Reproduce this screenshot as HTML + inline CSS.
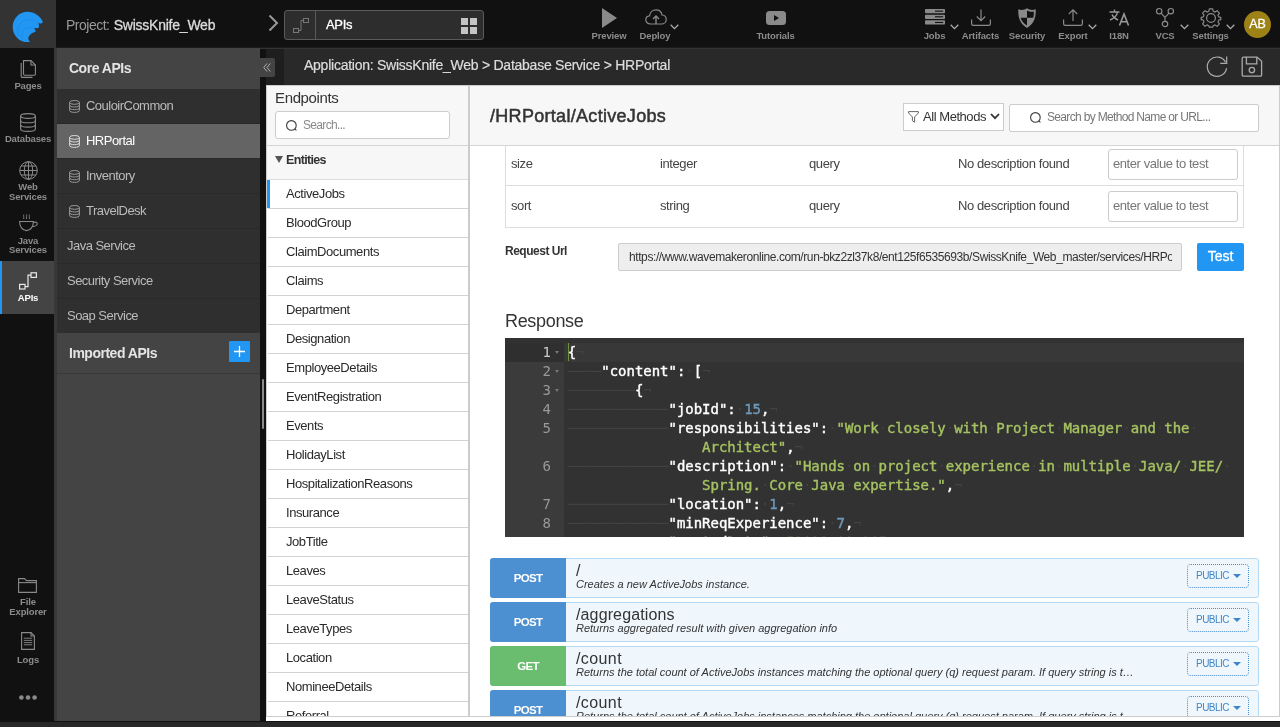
<!DOCTYPE html>
<html lang="en">
<head>
<meta charset="utf-8">
<title>WaveMaker Studio - APIs</title>
<style>
*{box-sizing:border-box;margin:0;padding:0}
html,body{width:1280px;height:727px;overflow:hidden;background:#111;-webkit-font-smoothing:antialiased;font-family:"Liberation Sans",sans-serif;color:#333}
.abs{position:absolute}
svg{display:block;overflow:visible}
/* top bar */
#topbar{position:absolute;left:0;top:0;width:1280px;height:48px;background:#111}
#logo{position:absolute;left:0;top:0;width:56px;height:48px;background:#333}
.tb-item{position:absolute;top:0;height:48px;color:#8c8c8c;font-size:9.5px;text-align:center;font-weight:bold;letter-spacing:-0.13px}
.tb-item .lbl{position:absolute;left:-30px;right:-30px;top:29.5px;line-height:12px;text-align:center;white-space:nowrap}
/* left nav */
#leftnav{position:absolute;left:0;top:48px;width:54px;height:673px;background:#111}
#navborder{position:absolute;left:54px;top:48px;width:3px;height:673px;background:#383838}
.nav-item{position:absolute;left:0;width:56px;margin-top:1px;color:#8c8c8c;font-size:9.5px;line-height:10px;text-align:center;font-weight:bold;letter-spacing:-0.15px}
/* side panel */
#side{position:absolute;left:57px;top:48px;width:203px;height:673px;background:#444}
.side-h{position:absolute;left:0;width:203px;height:40px;background:#444;color:#e4e4e4;font-weight:bold;font-size:14px;line-height:40px;padding-left:12px;letter-spacing:-0.49px}
.side-i{position:absolute;left:0;width:203px;height:35px;background:#2f2f2f;border-bottom:1px solid #292929;color:#bbb;font-size:13px;line-height:34px;letter-spacing:-0.52px}
.side-i.sel{background:#646464;color:#fff}
/* main */
#crumb{position:absolute;left:284px;top:48px;width:996px;height:37px;background:#292929;color:#ddd;font-size:14px;line-height:35px;letter-spacing:-0.25px;-webkit-text-stroke:0.2px #ddd}
#panel{position:absolute;left:266px;top:85px;width:1014px;height:632px;background:#fff;border-right:1px solid #ccc;border-bottom:1px solid #ccc;overflow:hidden}
#bottombar{position:absolute;left:0;top:721px;width:1280px;height:6px;background:#282828;border-top:1px solid #111}

/* panel (coords relative to 266,85) */
#ep-h{position:absolute;left:0;top:0;width:202px;height:61px;background:#f7f7f7;border-top:1px solid #ccc;border-left:1px solid #ccc;border-bottom:1px solid #d4d4d4}
#ep-ent{position:absolute;left:0;top:61px;width:202px;height:34px;background:#f7f7f7;border-left:1px solid #ccc;border-bottom:1px solid #ddd}
.ep-i{position:absolute;left:2px;width:200px;height:29px;border-bottom:1px solid #d2d2d2;font-size:13px;line-height:28px;color:#2a2a2a;padding-left:18px;letter-spacing:-0.43px;white-space:nowrap;background:#fff}
#vdiv{position:absolute;left:202px;top:0;width:2px;height:632px;background:#ccc}
#ct-h{position:absolute;left:204px;top:0;width:810px;height:61px;background:#f7f7f7;border-top:1px solid #ccc;border-bottom:1px solid #d4d4d4}
.inp{position:absolute;background:#fff;border:1px solid #ccc;border-radius:3px}
.td{position:absolute;font-size:13px;line-height:16px;color:#444;white-space:nowrap;letter-spacing:-0.4px}
.ph{color:#777}
/* ace */
#ace{position:absolute;left:239px;top:253px;width:739px;height:199px;background:#323232;overflow:hidden;font-family:"DejaVu Sans Mono","Liberation Mono",monospace;font-size:14px;line-height:19px;color:#fff}
#ace .gut{position:absolute;left:0;top:4.5px;width:59px;height:200px;background:#3b3b3b}
#ace .ln{position:absolute;left:0;width:46px;text-align:right;color:#999;height:19px}
#ace .fold{position:absolute;left:50px;width:0;height:0;border-left:2.5px solid transparent;border-right:2.5px solid transparent;border-top:3px solid #777}
#ace .l{position:absolute;left:62.7px;-webkit-text-stroke:0.4px currentColor;height:19px;white-space:pre;letter-spacing:-0.028px}
#ace .s{color:#a5c261}
#ace .n{color:#6c99bb}
#ace .i{color:#424242;-webkit-text-stroke:0}
/* method rows */
.mrow{position:absolute;left:224px;width:769px;height:40px;background:#eff7fd;border:1px solid #b4dbf5;border-radius:3px}
.mrow .bdg{position:absolute;left:-1px;top:-1px;width:76px;height:40px;border-radius:3px 0 0 3px;color:#fff;font-weight:bold;font-size:11.5px;line-height:41px;text-align:center;letter-spacing:-0.7px}
.mrow .pth{position:absolute;left:85px;top:3px;font-size:16px;line-height:18px;color:#333;white-space:nowrap;letter-spacing:0.13px}
.mrow .dsc{position:absolute;left:85px;top:19px;font-size:11px;line-height:13px;font-style:italic;color:#333;white-space:nowrap;letter-spacing:0px}
.mrow .pub{position:absolute;left:696px;top:5px;width:62px;height:24px;border:1px dotted #4a8fd0;border-radius:4px;color:#3f86c8;font-size:10px;line-height:22px;padding-left:8px;letter-spacing:-0.53px}
.mrow .pub i{position:absolute;left:45px;top:9px;width:0;height:0;border-left:4px solid transparent;border-right:4px solid transparent;border-top:4px solid #3f86c8}
</style>
</head>
<body><div id="root" style="position:absolute;left:0;top:0;width:1280px;height:727px;will-change:transform">
<div id="topbar">
<div class="abs" style="left:0;top:47px;width:1280px;height:1px;background:#1c1c1c"></div>
<div class="abs" style="left:66px;top:15px;font-size:14px;line-height:20px;color:#999;white-space:nowrap;letter-spacing:-0.5px">Project: <span style="color:#dcdcdc;letter-spacing:-0.23px;margin-left:0.8px;-webkit-text-stroke:0.3px #dcdcdc">SwissKnife_Web</span></div>
<svg class="abs" style="left:267px;top:14px" width="12" height="18" viewBox="0 0 12 18"><path d="M2.5 1.5 L10 9 L2.5 16.5" fill="none" stroke="#999" stroke-width="2"/></svg>
<div class="abs" style="left:284px;top:10px;width:200px;height:30px;border:1px solid #5a5a5a;border-radius:3px;background:#2d2d2d">
  <div class="abs" style="left:30px;top:0;width:1px;height:28px;background:#5a5a5a"></div>
  <svg class="abs" style="left:7.5px;top:6.5px" width="16" height="16" viewBox="0 0 16 16" fill="none" stroke="#777" stroke-width="1"><rect x="0.5" y="10.5" width="5" height="4"/><rect x="10.5" y="0.5" width="5" height="4"/><path d="M5.5 12.5 H8 V2.5 H10.5"/></svg>
  <div class="abs" style="left:41px;top:0;line-height:28px;font-size:13px;color:#fff;-webkit-text-stroke:0.3px #fff;letter-spacing:-0.3px">APIs</div>
  <svg class="abs" style="left:176px;top:6.5px" width="16" height="16" viewBox="0 0 16 16" fill="#c4c4c4"><rect x="0" y="0" width="7" height="7"/><rect x="9" y="0" width="7" height="7"/><rect x="0" y="9" width="7" height="7"/><rect x="9" y="9" width="7" height="7"/></svg>
</div>
<!-- Preview -->
<div class="tb-item" style="left:609px;width:0"><svg class="abs" style="left:-7px;top:8px" width="15" height="20" viewBox="0 0 15 20"><path d="M0 0 L15 10 L0 20Z" fill="#8a8a8a"/></svg><div class="lbl">Preview</div></div>
<!-- Deploy -->
<div class="tb-item" style="left:655px;width:0"><svg class="abs" style="left:-10px;top:9px" width="22" height="16" viewBox="0 0 22 16" fill="none" stroke="#8a8a8a" stroke-width="1.2"><path d="M5.5 15 C2.5 15 0.8 13 0.8 10.8 C0.8 8.6 2.4 7 4.6 6.8 C5 3.2 7.8 0.8 11 0.8 C14.2 0.8 16.6 3 17 6 C19.4 6.2 21.2 8 21.2 10.4 C21.2 13 19.2 15 16.6 15 Z"/><path d="M11 15 V7 M8 10 L11 7 L14 10" stroke-width="1.4"/></svg><div class="lbl">Deploy</div><svg class="abs" style="left:14.5px;top:23.5px" width="9" height="6" viewBox="0 0 9 6"><path d="M0.7 0.8 L4.5 4.6 L8.3 0.8" fill="none" stroke="#aaa" stroke-width="1.3"/></svg></div>
<!-- Tutorials -->
<div class="tb-item" style="left:775.5px;width:0"><svg class="abs" style="left:-10px;top:11px" width="20" height="14" viewBox="0 0 20 14"><rect x="0" y="0" width="20" height="14" rx="3.5" fill="#8a8a8a"/><path d="M8 4 L13 7 L8 10Z" fill="#111"/></svg><div class="lbl">Tutorials</div></div>
<!-- Jobs -->
<div class="tb-item" style="left:934.5px;width:0"><svg class="abs" style="left:-10px;top:9px" width="20" height="15.8" viewBox="0 0 22 17" preserveAspectRatio="none" fill="#8a8a8a"><rect x="0" y="0" width="22" height="4.6" rx="0.8"/><rect x="0" y="6.1" width="22" height="4.6" rx="0.8"/><rect x="0" y="12.2" width="22" height="4.6" rx="0.8"/><rect x="11" y="1.7" width="9" height="1.2" fill="#111"/><rect x="11" y="7.8" width="9" height="1.2" fill="#111"/><rect x="11" y="13.9" width="9" height="1.2" fill="#111"/></svg><div class="lbl">Jobs</div><svg class="abs" style="left:15px;top:23.5px" width="9" height="6" viewBox="0 0 9 6"><path d="M0.7 0.8 L4.5 4.6 L8.3 0.8" fill="none" stroke="#aaa" stroke-width="1.3"/></svg></div>
<!-- Artifacts -->
<div class="tb-item" style="left:980.5px;width:0"><svg class="abs" style="left:-10px;top:9px" width="20" height="17" viewBox="0 0 20 17" fill="none" stroke="#8a8a8a" stroke-width="1.2"><path d="M10 0.5 V11.5 M5.8 7.5 L10 11.7 L14.2 7.5"/><path d="M0.6 10.5 V14.8 A1.6 1.6 0 0 0 2.2 16.4 H17.8 A1.6 1.6 0 0 0 19.4 14.8 V10.5"/></svg><div class="lbl">Artifacts</div></div>
<!-- Security -->
<div class="tb-item" style="left:1027px;width:0"><svg class="abs" style="left:-9px;top:8px" width="18" height="20" viewBox="0 0 18 20"><path d="M0.3 1.2 C3.5 2.6 6.5 1.8 9 0.2 C11.5 1.8 14.5 2.6 17.7 1.2 C18 8 17 15 9 20 C1 15 0 8 0.3 1.2Z" fill="#8a8a8a"/><path d="M9 2.4 C11 3.6 13.5 4 15.8 3.5 C15.9 5.6 15.8 7.8 15.3 9.8 H9 Z" fill="#111"/><path d="M9 9.8 V17.6 C5.2 15 3.3 12.6 2.7 9.8 Z" fill="#111"/></svg><div class="lbl">Security</div></div>
<!-- Export -->
<div class="tb-item" style="left:1073px;width:0"><svg class="abs" style="left:-10px;top:9px" width="20" height="17" viewBox="0 0 20 17" fill="none" stroke="#8a8a8a" stroke-width="1.2"><path d="M10 12 V1 M5.8 5 L10 0.8 L14.2 5"/><path d="M0.6 10.5 V14.8 A1.6 1.6 0 0 0 2.2 16.4 H17.8 A1.6 1.6 0 0 0 19.4 14.8 V10.5"/></svg><div class="lbl">Export</div><svg class="abs" style="left:15px;top:23.5px" width="9" height="6" viewBox="0 0 9 6"><path d="M0.7 0.8 L4.5 4.6 L8.3 0.8" fill="none" stroke="#aaa" stroke-width="1.3"/></svg></div>
<!-- I18N -->
<div class="tb-item" style="left:1119px;width:0"><svg class="abs" style="left:-10px;top:9px" width="21" height="17" viewBox="0 0 21 17" fill="none" stroke="#999" stroke-width="1.4"><path d="M0.5 3 H10.5 M5.5 0.5 V3 M8.5 3 C8 6.5 5 9.5 1 11 M3 5.5 C4 8 6.5 10 9 11"/><path d="M10.5 16.5 L15 5 L19.5 16.5 M12 12.8 H18" stroke-width="1.6"/></svg><div class="lbl">I18N</div></div>
<!-- VCS -->
<div class="tb-item" style="left:1165px;width:0"><svg class="abs" style="left:-9px;top:8px" width="18" height="19" viewBox="0 0 18 19" fill="none" stroke="#8a8a8a" stroke-width="1.2"><circle cx="3.2" cy="3.2" r="2.7"/><circle cx="14.8" cy="3.2" r="2.7"/><circle cx="9" cy="16" r="2.7"/><path d="M5 5.2 L9 9.4 L13 5.2 M9 9.4 V13.3"/></svg><div class="lbl">VCS</div><svg class="abs" style="left:15px;top:23.5px" width="9" height="6" viewBox="0 0 9 6"><path d="M0.7 0.8 L4.5 4.6 L8.3 0.8" fill="none" stroke="#aaa" stroke-width="1.3"/></svg></div>
<!-- Settings -->
<div class="tb-item" style="left:1210.5px;width:0"><svg class="abs" style="left:-9.5px;top:7.5px" width="20" height="20" viewBox="0 0 20 20" fill="none" stroke="#8a8a8a" stroke-width="1.2"><circle cx="10" cy="10" r="4.4"/><path d="M8.3 0.8 H11.7 L12.2 3.3 L14 4.1 L16.1 2.7 L18.4 5.1 L17 7.1 L17.7 8.9 L19.8 9.3 V11.7 L17.7 12.1 L17 13.9 L18.4 15.9 L16.1 18.3 L14 16.9 L12.2 17.7 L11.7 19.2 H8.3 L7.8 17.7 L6 16.9 L3.9 18.3 L1.6 15.9 L3 13.9 L2.3 12.1 L0.2 11.7 V9.3 L2.3 8.9 L3 7.1 L1.6 5.1 L3.9 2.7 L6 4.1 L7.8 3.3 Z" stroke-linejoin="round"/></svg><div class="lbl">Settings</div><svg class="abs" style="left:15px;top:23.5px" width="9" height="6" viewBox="0 0 9 6"><path d="M0.7 0.8 L4.5 4.6 L8.3 0.8" fill="none" stroke="#aaa" stroke-width="1.3"/></svg></div>
<!-- avatar -->
<div class="abs" style="left:1244px;top:11px;width:27px;height:27px;border-radius:50%;background:#9d8316;color:#fff;font-size:12.5px;line-height:27px;text-align:center;letter-spacing:-0.2px;-webkit-text-stroke:0.3px #fff">AB</div>
</div>
<div id="logo"><svg class="abs" style="left:8px;top:6px" width="42" height="40" viewBox="0 0 763 727"><path d="M355 104 C480 104 590 185 636 296 C600 330 565 318 548 306 C560 340 568 365 566 386 C535 410 495 405 470 396 C490 420 502 445 500 466 C450 480 400 510 375 560 C360 600 375 630 402 650 C385 655 370 656 355 656 C205 656 85 535 85 380 C85 228 205 104 355 104Z" fill="#2196f3"/><path d="M188 560 C140 420 220 250 370 245 C450 243 510 270 548 306" fill="none" stroke="#1a80d4" stroke-width="7"/><path d="M268 600 C225 500 280 395 370 388 C410 385 445 388 470 396" fill="none" stroke="#1a80d4" stroke-width="7"/></svg></div>
<div id="leftnav">
<!-- coordinates relative to top:48 -->
<svg class="abs" style="left:20px;top:12px" width="16" height="18" viewBox="0 0 16 18" fill="none" stroke="#8a8a8a" stroke-width="1.1"><path d="M3.5 0.6 H11 L15.4 5 V14 A1.2 1.2 0 0 1 14.2 15.2 H4.7 A1.2 1.2 0 0 1 3.5 14 Z" fill="#111"/><path d="M11 0.6 V5 H15.4"/><path d="M1.2 3 V16.2 A1.2 1.2 0 0 0 2.4 17.4 H12.5"/></svg>
<div class="nav-item" style="top:32px">Pages</div>
<svg class="abs" style="left:20px;top:64.5px" width="16" height="19" viewBox="0 0 16 19" fill="none" stroke="#8a8a8a" stroke-width="1.1"><ellipse cx="8" cy="3" rx="7.4" ry="2.4"/><path d="M0.6 3 V16 C0.6 17.4 3.8 18.4 8 18.4 C12.2 18.4 15.4 17.4 15.4 16 V3"/><path d="M0.6 7.4 C0.6 8.8 3.8 9.8 8 9.8 C12.2 9.8 15.4 8.8 15.4 7.4 M0.6 11.7 C0.6 13.1 3.8 14.1 8 14.1 C12.2 14.1 15.4 13.1 15.4 11.7"/></svg>
<div class="nav-item" style="top:85px">Databases</div>
<svg class="abs" style="left:18.5px;top:113px" width="19" height="19" viewBox="0 0 19 19" fill="none" stroke="#8a8a8a" stroke-width="1"><circle cx="9.5" cy="9.5" r="8.8"/><ellipse cx="9.5" cy="9.5" rx="4.2" ry="8.8"/><path d="M9.5 0.7 V18.3 M0.7 9.5 H18.3 M2 5 H17 M2 14 H17"/></svg>
<div class="nav-item" style="top:133.3px;line-height:9.3px">Web<br>Services</div>
<svg class="abs" style="left:19px;top:166px" width="19" height="18" viewBox="0 0 19 18" fill="none" stroke="#8a8a8a" stroke-width="1.1"><path d="M0.6 7.5 H14.4 C14.4 12.5 11.8 16.6 7.5 16.6 C3.2 16.6 0.6 12.5 0.6 7.5Z"/><path d="M14.3 8.6 C16.6 7.6 18.4 8.4 18.2 10 C18 11.6 15.6 12.6 13.4 12.4"/><path d="M4.8 0.5 C4 2 5.4 3 4.6 5 M7.6 0.5 C6.8 2 8.2 3 7.4 5 M10.4 0.5 C9.6 2 11 3 10.2 5" stroke-width="0.9"/></svg>
<div class="nav-item" style="top:186.8px;line-height:9.3px">Java<br>Services</div>
<div class="abs" style="left:0;top:213px;width:54px;height:53px;background:#444;border-left:2px solid #2196f3"></div>
<svg class="abs" style="left:19px;top:224px" width="18" height="18" viewBox="0 0 18 18" fill="none" stroke="#e8e8e8" stroke-width="1.2"><rect x="0.6" y="12.4" width="5.4" height="4.6"/><rect x="12" y="0.8" width="5.4" height="4.6"/><path d="M6 14.7 H9 V3.1 H12"/></svg>
<div class="nav-item" style="top:244px;color:#fff">APIs</div>
<svg class="abs" style="left:18px;top:530px" width="19" height="15" viewBox="0 0 19 15" fill="none" stroke="#8a8a8a" stroke-width="1.1"><path d="M0.6 14.4 V0.6 H6.5 L8.5 2.6 H18.4 V14.4 Z"/><path d="M0.6 4.6 H18.4"/></svg>
<div class="nav-item" style="top:547.7px;line-height:10.3px">File<br>Explorer</div>
<svg class="abs" style="left:20.5px;top:584px" width="14" height="18" viewBox="0 0 14 18" fill="none" stroke="#8a8a8a" stroke-width="1.1"><path d="M0.6 0.6 H10 L13.4 4 V17.4 H0.6 Z"/><path d="M10 0.6 V4 H13.4"/><path d="M2.8 6.2 H11.2 M2.8 8.4 H11.2 M2.8 10.6 H11.2 M2.8 12.8 H11.2" stroke-width="0.9"/></svg>
<div class="nav-item" style="top:605.5px">Logs</div>
<svg class="abs" style="left:18.5px;top:646.5px" width="18" height="5" viewBox="0 0 18 5" fill="#8a8a8a"><circle cx="2.4" cy="2.5" r="2.3"/><circle cx="9" cy="2.5" r="2.3"/><circle cx="15.6" cy="2.5" r="2.3"/></svg>
</div>
<div id="navborder"></div>
<div id="side">
<div class="side-h" style="top:0">Core APIs</div>
<div class="side-i" style="top:41px"><svg class="abs" style="left:12px;top:11px" width="11" height="13" viewBox="0 0 11 13" fill="none" stroke="#999" stroke-width="1"><ellipse cx="5.5" cy="2.4" rx="4.9" ry="1.9"/><path d="M0.6 2.4 V10.6 C0.6 11.6 2.8 12.4 5.5 12.4 C8.2 12.4 10.4 11.6 10.4 10.6 V2.4"/><path d="M0.6 5.2 C0.6 6.2 2.8 7 5.5 7 C8.2 7 10.4 6.2 10.4 5.2 M0.6 7.9 C0.6 8.9 2.8 9.7 5.5 9.7 C8.2 9.7 10.4 8.9 10.4 7.9"/></svg><span class="abs" style="left:29px;top:0;white-space:nowrap">CouloirCommon</span></div>
<div class="side-i sel" style="top:76px"><svg class="abs" style="left:12px;top:11px" width="11" height="13" viewBox="0 0 11 13" fill="none" stroke="#ddd" stroke-width="1"><ellipse cx="5.5" cy="2.4" rx="4.9" ry="1.9"/><path d="M0.6 2.4 V10.6 C0.6 11.6 2.8 12.4 5.5 12.4 C8.2 12.4 10.4 11.6 10.4 10.6 V2.4"/><path d="M0.6 5.2 C0.6 6.2 2.8 7 5.5 7 C8.2 7 10.4 6.2 10.4 5.2 M0.6 7.9 C0.6 8.9 2.8 9.7 5.5 9.7 C8.2 9.7 10.4 8.9 10.4 7.9"/></svg><span class="abs" style="left:29px;top:0;white-space:nowrap">HRPortal</span></div>
<div class="side-i" style="top:111px"><svg class="abs" style="left:12px;top:11px" width="11" height="13" viewBox="0 0 11 13" fill="none" stroke="#999" stroke-width="1"><ellipse cx="5.5" cy="2.4" rx="4.9" ry="1.9"/><path d="M0.6 2.4 V10.6 C0.6 11.6 2.8 12.4 5.5 12.4 C8.2 12.4 10.4 11.6 10.4 10.6 V2.4"/><path d="M0.6 5.2 C0.6 6.2 2.8 7 5.5 7 C8.2 7 10.4 6.2 10.4 5.2 M0.6 7.9 C0.6 8.9 2.8 9.7 5.5 9.7 C8.2 9.7 10.4 8.9 10.4 7.9"/></svg><span class="abs" style="left:29px;top:0;white-space:nowrap">Inventory</span></div>
<div class="side-i" style="top:146px"><svg class="abs" style="left:12px;top:11px" width="11" height="13" viewBox="0 0 11 13" fill="none" stroke="#999" stroke-width="1"><ellipse cx="5.5" cy="2.4" rx="4.9" ry="1.9"/><path d="M0.6 2.4 V10.6 C0.6 11.6 2.8 12.4 5.5 12.4 C8.2 12.4 10.4 11.6 10.4 10.6 V2.4"/><path d="M0.6 5.2 C0.6 6.2 2.8 7 5.5 7 C8.2 7 10.4 6.2 10.4 5.2 M0.6 7.9 C0.6 8.9 2.8 9.7 5.5 9.7 C8.2 9.7 10.4 8.9 10.4 7.9"/></svg><span class="abs" style="left:29px;top:0;white-space:nowrap">TravelDesk</span></div>
<div class="side-i" style="top:181px"><span class="abs" style="left:10px;top:0;white-space:nowrap">Java Service</span></div>
<div class="side-i" style="top:216px"><span class="abs" style="left:10px;top:0;white-space:nowrap">Security Service</span></div>
<div class="side-i" style="top:251px"><span class="abs" style="left:10px;top:0;white-space:nowrap">Soap Service</span></div>
<div class="side-h" style="top:285px;height:41px;border-bottom:1px solid #383838">Imported APIs<div class="abs" style="left:172px;top:8px;width:21px;height:21px;background:#2196f3;border-radius:1px"><svg class="abs" style="left:5px;top:5px" width="11" height="11" viewBox="0 0 11 11"><path d="M5.5 0 V11 M0 5.5 H11" stroke="#fff" stroke-width="1.3"/></svg></div></div>
</div>
<div class="abs" style="left:260px;top:58px;width:15px;height:19px;background:#444;border-radius:0 2px 2px 0;z-index:5"><svg class="abs" style="left:3px;top:5px" width="8" height="9" viewBox="0 0 8 9" fill="none" stroke="#bbb" stroke-width="0.9"><path d="M4 0.5 L0.7 4.5 L4 8.5 M7.3 0.5 L4 4.5 L7.3 8.5"/></svg></div>
<div class="abs" style="left:262px;top:379px;width:2px;height:50px;background:#8a8a8a;border-radius:1px"></div>
<div class="abs" style="left:266px;top:48px;width:18px;height:37px;background:#1e1e1e"></div>
<div id="crumb"><span class="abs" style="left:20px;top:0;white-space:nowrap">Application: SwissKnife_Web &gt; Database Service &gt; HRPortal</span>
<div class="abs" style="left:-24px;top:0;width:1020px;height:1px;background:#333"></div>
<svg class="abs" style="left:922px;top:7px" width="22" height="22" viewBox="0 0 22 22" fill="none" stroke="#aaa" stroke-width="1.2"><path d="M20.6 13.2 A9.7 9.7 0 1 1 19.6 7.2"/><path d="M20.7 1.6 V8.3 H14.2"/></svg>
<svg class="abs" style="left:957px;top:7px" width="22" height="22" viewBox="0 0 22 22" fill="none" stroke="#aaa" stroke-width="1.3"><path d="M2.4 2.1 H16 L20.6 6.4 V20 A1.2 1.2 0 0 1 19.4 21.2 H2.4 A1.2 1.2 0 0 1 1.2 20 V3.3 A1.2 1.2 0 0 1 2.4 2.1Z"/><path d="M5.4 2.1 V8.8 H15.8 V2.1"/><circle cx="10.9" cy="15" r="2.7"/></svg></div>
<div id="panel">
<div id="ep-h"><div class="abs" style="left:8px;top:3px;font-size:15px;line-height:18px;color:#333;letter-spacing:-0.36px">Endpoints</div><div class="inp" style="left:8px;top:25px;width:175px;height:28px"><svg class="abs" style="left:10px;top:7.5px" width="12" height="12" viewBox="0 0 12 12" fill="none" stroke="#3c3c3c" stroke-width="1.1"><circle cx="5.4" cy="5.4" r="4.8"/><path d="M8.8 8.8 L10.4 10.4"/></svg><span class="abs ph" style="left:27px;top:0;line-height:26px;font-size:12px;letter-spacing:-0.67px;color:#888">Search...</span></div></div>
<div id="ep-ent"><div class="abs" style="left:8px;top:10px;width:0;height:0;border-left:4px solid transparent;border-right:4px solid transparent;border-top:7px solid #555"></div><div class="abs" style="left:19px;top:6px;font-size:12.5px;line-height:16px;font-weight:bold;color:#333;letter-spacing:-0.67px">Entities</div></div>
<div class="ep-i" style="top:95px"><div class="abs" style="left:-1px;top:0;width:3px;height:28px;background:#2196f3"></div>ActiveJobs</div>
<div class="ep-i" style="top:124px">BloodGroup</div>
<div class="ep-i" style="top:153px">ClaimDocuments</div>
<div class="ep-i" style="top:182px">Claims</div>
<div class="ep-i" style="top:211px">Department</div>
<div class="ep-i" style="top:240px">Designation</div>
<div class="ep-i" style="top:269px">EmployeeDetails</div>
<div class="ep-i" style="top:298px">EventRegistration</div>
<div class="ep-i" style="top:327px">Events</div>
<div class="ep-i" style="top:356px">HolidayList</div>
<div class="ep-i" style="top:385px">HospitalizationReasons</div>
<div class="ep-i" style="top:414px">Insurance</div>
<div class="ep-i" style="top:443px">JobTitle</div>
<div class="ep-i" style="top:472px">Leaves</div>
<div class="ep-i" style="top:501px">LeaveStatus</div>
<div class="ep-i" style="top:530px">LeaveTypes</div>
<div class="ep-i" style="top:559px">Location</div>
<div class="ep-i" style="top:588px">NomineeDetails</div>
<div class="ep-i" style="top:617px">Referral</div>
<div class="abs" style="left:0;top:95px;width:1px;height:540px;background:#ccc"></div>
<div id="vdiv"></div>
<div id="ct-h"><div class="abs" style="left:20px;top:18px;font-size:18px;line-height:24px;color:#333;white-space:nowrap;letter-spacing:0.3px;-webkit-text-stroke:0.5px #333">/HRPortal/ActiveJobs</div><div class="abs" style="left:433px;top:17px;width:101px;height:28px;background:#fff;border:1px solid #ccc"><svg class="abs" style="left:4px;top:7px" width="11" height="12" viewBox="0 0 11 12" fill="none" stroke="#555" stroke-width="0.9"><path d="M0.6 0.6 H10.4 V2 L6.6 6 V11.2 L4.4 9.8 V6 L0.6 2 Z" stroke-linejoin="round"/></svg><span class="abs" style="left:19px;top:0;line-height:26px;font-size:13px;color:#333;white-space:nowrap;letter-spacing:-0.45px">All Methods</span><svg class="abs" style="left:86px;top:9px" width="10" height="7" viewBox="0 0 10 7"><path d="M1 1 L5 5.2 L9 1" fill="none" stroke="#333" stroke-width="1.8"/></svg></div><div class="inp" style="left:539px;top:18px;width:250px;height:28px;border-radius:2px"><svg class="abs" style="left:20px;top:7px" width="12" height="12" viewBox="0 0 12 12" fill="none" stroke="#3c3c3c" stroke-width="1.1"><circle cx="5.4" cy="5.4" r="4.8"/><path d="M8.8 8.8 L10.4 10.4"/></svg><span class="abs ph" style="left:37px;top:0;line-height:25px;font-size:12px;white-space:nowrap;letter-spacing:-0.67px">Search by Method Name or URL...</span></div></div>
<div class="abs" style="left:239px;top:61px;width:739px;height:82px;border-left:1px solid #ddd;border-right:1px solid #ddd;border-bottom:1px solid #ddd"></div>
<div class="abs" style="left:239px;top:100px;width:739px;height:1px;background:#ddd"></div>
<div class="td" style="left:245px;top:71px">size</div><div class="td" style="left:394px;top:71px">integer</div><div class="td" style="left:543px;top:71px">query</div><div class="td" style="left:692px;top:71px">No description found</div><div class="inp" style="left:842px;top:64px;width:130px;height:31px"><span class="abs ph" style="left:4px;top:0;line-height:27.5px;font-size:13px;white-space:nowrap;letter-spacing:-0.43px">enter value to test</span></div>
<div class="td" style="left:245px;top:113px">sort</div><div class="td" style="left:394px;top:113px">string</div><div class="td" style="left:543px;top:113px">query</div><div class="td" style="left:692px;top:113px">No description found</div><div class="inp" style="left:842px;top:106px;width:130px;height:31px"><span class="abs ph" style="left:4px;top:0;line-height:27.5px;font-size:13px;white-space:nowrap;letter-spacing:-0.43px">enter value to test</span></div>
<div class="abs" style="left:239px;top:158px;font-size:12px;line-height:16px;font-weight:bold;color:#333;white-space:nowrap;letter-spacing:-0.49px">Request Url</div>
<div class="abs" style="left:352px;top:158px;width:564px;height:28px;background:#eee;border:1px solid #ccc;border-radius:2px;overflow:hidden"><span class="abs" style="left:10px;top:0;line-height:26px;font-size:12px;color:#333;white-space:nowrap;letter-spacing:-0.41px;width:543px;overflow:hidden">https://www.wavemakeronline.com/run-bkz2zl37k8/ent125f6535693b/SwissKnife_Web_master/services/HRPortal/ActiveJobs</span></div>
<div class="abs" style="left:931px;top:158px;width:47px;height:28px;background:#2196f3;border-radius:2px;color:#fff;font-size:14px;line-height:27px;text-align:center;letter-spacing:0;-webkit-text-stroke:0.3px #fff">Test</div>
<div class="abs" style="left:239px;top:224px;font-size:18px;line-height:24px;color:#333;letter-spacing:-0.32px">Response</div>
<div id="ace"><div class="gut"></div>
<div class="abs" style="left:0;top:4.5px;width:59px;height:19px;background:#2f2f2f"></div><div class="abs" style="left:59px;top:4.5px;width:680px;height:19px;background:#383838"></div><div class="abs" style="left:63px;top:5px;width:1px;height:18px;background:#6f9440"></div>
<div class="ln" style="top:4.5px;color:#ccc">1</div><div class="fold" style="top:12.5px"></div><div class="l" style="top:4.5px">{<span class="i">¬</span></div>
<div class="ln" style="top:23.5px">2</div><div class="fold" style="top:31.5px"></div><div class="l" style="top:23.5px"><span class="i">────</span>"content":<span class="i">·</span>[<span class="i">¬</span></div>
<div class="ln" style="top:42.5px">3</div><div class="fold" style="top:50.5px"></div><div class="l" style="top:42.5px"><span class="i">────────</span>{<span class="i">¬</span></div>
<div class="ln" style="top:61.5px">4</div><div class="l" style="top:61.5px"><span class="i">────────────</span>"jobId":<span class="i">·</span><span class="n">15</span>,<span class="i">¬</span></div>
<div class="ln" style="top:80.5px">5</div><div class="l" style="top:80.5px"><span class="i">────────────</span>"responsibilities":<span class="i">·</span><span class="s">"Work</span><span class="i">·</span><span class="s">closely</span><span class="i">·</span><span class="s">with</span><span class="i">·</span><span class="s">Project</span><span class="i">·</span><span class="s">Manager</span><span class="i">·</span><span class="s">and</span><span class="i">·</span><span class="s">the</span><span class="i">·</span></div>
<div class="l" style="top:99.5px">                <span class="s">Architect"</span>,<span class="i">¬</span></div>
<div class="ln" style="top:118.5px">6</div><div class="l" style="top:118.5px"><span class="i">────────────</span>"description":<span class="i">·</span><span class="s">"Hands</span><span class="i">·</span><span class="s">on</span><span class="i">·</span><span class="s">project</span><span class="i">·</span><span class="s">experience</span><span class="i">·</span><span class="s">in</span><span class="i">·</span><span class="s">multiple</span><span class="i">·</span><span class="s">Java/</span><span class="i">·</span><span class="s">JEE/</span><span class="i">·</span></div>
<div class="l" style="top:137.5px">                <span class="s">Spring.</span><span class="i">·</span><span class="s">Core</span><span class="i">·</span><span class="s">Java</span><span class="i">·</span><span class="s">expertise."</span>,<span class="i">¬</span></div>
<div class="ln" style="top:156.5px">7</div><div class="l" style="top:156.5px"><span class="i">────────────</span>"location":<span class="i">·</span><span class="n">1</span>,<span class="i">¬</span></div>
<div class="ln" style="top:175.5px">8</div><div class="l" style="top:175.5px"><span class="i">────────────</span>"minReqExperience":<span class="i">·</span><span class="n">7</span>,<span class="i">¬</span></div>
<div class="ln" style="top:194.5px">9</div><div class="l" style="top:194.5px"><span class="i">────────────</span>"postedDate":<span class="i">·</span><span class="s">"2020-03-26"</span>,<span class="i">¬</span></div>
</div>
<div class="mrow" style="top:473px"><div class="bdg" style="background:#4d90d1">POST</div><div class="pth">/</div><div class="dsc">Creates a new ActiveJobs instance.</div><div class="pub">PUBLIC<i></i></div></div>
<div class="mrow" style="top:517px"><div class="bdg" style="background:#4d90d1">POST</div><div class="pth">/aggregations</div><div class="dsc">Returns aggregated result with given aggregation info</div><div class="pub">PUBLIC<i></i></div></div>
<div class="mrow" style="top:561px"><div class="bdg" style="background:#6abc6e">GET</div><div class="pth" style="letter-spacing:0.4px">/count</div><div class="dsc">Returns the total count of ActiveJobs instances matching the optional query (q) request param. If query string is t…</div><div class="pub">PUBLIC<i></i></div></div>
<div class="mrow" style="top:605px"><div class="bdg" style="background:#4d90d1">POST</div><div class="pth" style="letter-spacing:0.4px">/count</div><div class="dsc">Returns the total count of ActiveJobs instances matching the optional query (q) request param. If query string is t…</div><div class="pub">PUBLIC<i></i></div></div>
</div>
<div class="abs" style="left:266px;top:717px;width:1014px;height:4px;background:#fff"></div>
<div id="bottombar"></div>
</div></body>
</html>
